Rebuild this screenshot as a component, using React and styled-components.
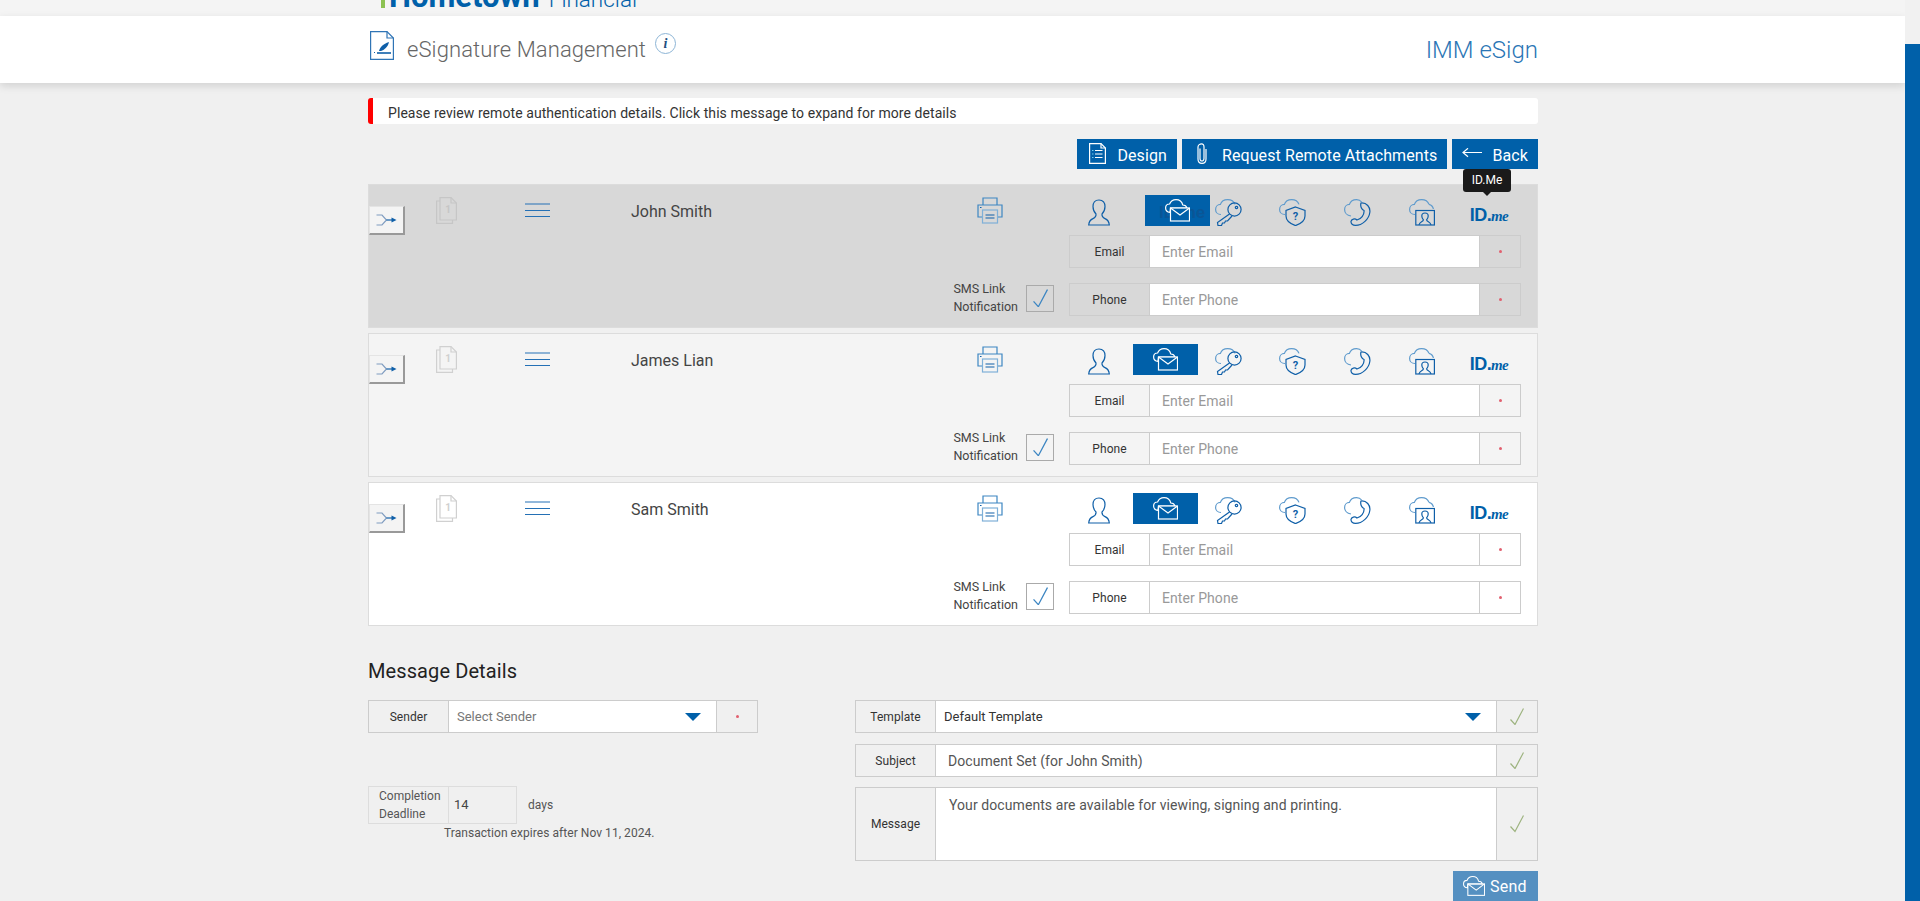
import React from "react";
import styled, { createGlobalStyle } from "styled-components";

const DARK = "#0f5fa8";
const LIGHT = "#5f9bcd";

const GlobalStyle = createGlobalStyle`
  html, body {
    margin: 0;
    height: 100%;
    overflow: hidden;
    background: #f0f0f0;
    font-family: Roboto, "Liberation Sans", sans-serif;
  }
  * { box-sizing: border-box; }
`;

const Icon = styled.svg`
  position: relative;
  display: block;
  flex: none;
  fill: none;
  stroke: ${(p) => p.$color || DARK};
  stroke-width: 1.2;
`;

const CLOUD = "M6 15.5 C2.5 15.5 .6 13 .6 10.4 C.6 7.5 2.8 5.4 5.4 5.4 C6.4 2.4 9.4 .6 12.6 .6 C16.2 .6 19 2.6 20 5.4";

const PersonIcon = () => (
  <Icon width="22" height="27" viewBox="0 0 22 27">
    <path d="M11 1 C6.8 1 5 4 5 7.5 C5 11 6.5 13.5 8 15 C8.2 17 7.5 18.5 5 19.6 C2.6 20.6 1 22 .7 26 H21.3 C21 22 19.4 20.6 17 19.6 C14.5 18.5 13.8 17 14 15 C15.5 13.5 17 11 17 7.5 C17 4 15.2 1 11 1 Z" />
  </Icon>
);

const MailCloudIcon = ({ size = 25, fill = "none" }) => (
  <Icon width={size} height={size * 0.9} viewBox="0 0 25 22.5" $color="#fff">
    <path d="M5 13.4 C1.8 13 .6 10.8 .6 9 C.6 6.6 2.4 5 4.6 5 C5.6 2.4 8 .6 11 .6 C14.4 .6 17 2.8 17.8 6 C19.6 6 21.4 7 22 9 H5.5 Z" fill={fill} />
    <rect x="5.5" y="9" width="19" height="13" fill={fill} />
    <path d="M5.5 9 L15 16 L24.5 9" />
  </Icon>
);

const KeyIcon = () => (
  <Icon width="27" height="27" viewBox="0 0 27 27">
    <path d={CLOUD} stroke={LIGHT} />
    <circle cx="19.5" cy="10.5" r="6.6" />
    <circle cx="21.5" cy="8.5" r="1.2" />
    <path d="M14.5 15 L2.5 23.5 L3 26.5 H6.5 L7.5 24 H9.5 L10.5 22 H12.5 L17 17" />
  </Icon>
);

const QuestionMark = styled.text`
  font: 700 11px Roboto, sans-serif;
  fill: ${DARK};
  stroke: none;
`;

const ShieldIcon = () => (
  <Icon width="27" height="27" viewBox="0 0 27 27">
    <path d={CLOUD} stroke={LIGHT} />
    <path d="M16.5 8 L26 11.5 V17 C26 21.5 21 25 16.5 26.6 C12 25 7 21.5 7 17 V11.5 Z" />
    <QuestionMark x="16.5" y="21" textAnchor="middle">?</QuestionMark>
  </Icon>
);

const PhoneIcon = () => (
  <Icon width="27" height="27" viewBox="0 0 27 27">
    <path d="M7 17 C2.8 16.5 .6 13.5 .6 10.4 C.6 7.5 2.8 5.4 5.4 5.4 C6.4 2.4 9.4 .6 12.6 .6 C15 .6 16.4 1.4 17.6 3" stroke={LIGHT} />
    <path d="M17 4 C22.5 3.5 26.6 8 25.8 13.5 C25 20 18.5 26.4 11.5 26.4 C8.6 26.4 6.8 24.6 7 22.4 C7.4 20 10.8 19 13 21 C17 20 20.5 16 20 11.5 C17.8 10.8 16 7.5 17 4 Z" />
  </Icon>
);

const VideoIcon = () => (
  <Icon width="26" height="27" viewBox="0 0 26 27">
    <path d={CLOUD} stroke={LIGHT} />
    <path d="M20 5.4 C22.4 6 24 8 24.4 10" stroke={LIGHT} />
    <rect x="6.8" y="11.5" width="18.6" height="14.5" />
    <path d="M10 26 C10.5 22.5 14 23 14.4 20.8 C13.2 19.6 12.8 18.4 12.8 17 C12.8 15 14.2 14 16 14 C17.8 14 19.2 15 19.2 17 C19.2 18.4 18.8 19.6 17.6 20.8 C18 23 21.5 22.5 22 26" />
  </Icon>
);

const PrinterIcon = () => (
  <Icon width="26" height="27" viewBox="0 0 26 27" $color="#3d86c2">
    <path d="M6 8 V1 H20 V8" />
    <path d="M5 20 H1 V8 H25 V20 H21" />
    <rect x="5.5" y="13" width="15" height="13" stroke="#7fb0d8" />
    <path d="M8.5 18 H17.5 M8.5 21 H17.5" stroke={DARK} />
    <path d="M3 10.5 H4.5" stroke={DARK} />
  </Icon>
);

const PageNumber = styled.text`
  font: 700 10px Roboto, sans-serif;
  stroke: none;
`;

const DocIcon = ({ $color }) => (
  <Icon width="21" height="27" viewBox="0 0 21 27" $color={$color}>
    <path d="M4 4 H.6 V26.4 H16.5 V23" />
    <path d="M4 .6 H15 L20.4 6 V23 H4 Z" />
    <path d="M15 .6 V6 H20.4" />
    <PageNumber x="12" y="15.5" textAnchor="middle" fill={$color}>1</PageNumber>
  </Icon>
);

const MenuIcon = () => (
  <Icon width="25" height="15" viewBox="0 0 25 15" $color="#2470b5">
    <path d="M0 1 H25 M0 7.5 H25 M0 13.5 H25" />
  </Icon>
);

const RouteIcon = () => (
  <Icon width="21" height="12" viewBox="0 0 21 12">
    <path d="M.5 1 H6 L10.5 6 L6 11 H.5" stroke="#7f9cc0" />
    <path d="M10.5 6 H16" />
    <path d="M15.5 3.5 L20.5 6 L15.5 8.5 Z" fill={DARK} stroke="none" />
  </Icon>
);

const CheckIcon = ({ $color = "#9db37f", size = 14 }) => (
  <Icon width={size} height={size * 1.25} viewBox="0 0 14 17.5" $color={$color}>
    <path d="M.5 11.5 L5 16.5 L13.5 .5" />
  </Icon>
);

const DesignIcon = () => (
  <Icon width="17" height="21" viewBox="0 0 17 21" $color="#fff">
    <path d="M.6 .6 H12 L16.4 5 V20.4 H.6 Z" />
    <path d="M12 .6 V5 H16.4" />
    <path d="M6 7.5 H13.5 M6 11 H13.5 M6 14.5 H13.5" />
    <path d="M3 7.5 H4.5 M3 11 H4.5 M3 14.5 H4.5" stroke="#6fd0f0" />
  </Icon>
);

const ClipIcon = () => (
  <Icon width="10" height="21" viewBox="0 0 10 21" $color="#fff">
    <path d="M3 5.5 V15.5 C3 17 4 18 5 18 C6 18 7 17 7 15.5 V4 C7 2 6 .8 4.6 .8 C3 .8 1 2 1 4 V16 C1 19 3 20.4 5 20.4 C7 20.4 9 19 9 16 V6" />
  </Icon>
);

const ArrowIcon = () => (
  <Icon width="20" height="11" viewBox="0 0 20 11" $color="#fff">
    <path d="M20 4.5 H1 M6 .3 L1 4.5 L6 8.7" />
  </Icon>
);

const SignDocIcon = () => (
  <Icon width="24" height="29" viewBox="0 0 24 29" $color="#2f74b5">
    <path d="M.6 .6 H17 L23.4 7 V28.4 H.6 Z" />
    <path d="M17 .6 V7 H23.4" />
    <path d="M7 22 H21" stroke={DARK} strokeWidth="1.6" />
    <path d="M9 20 C10 16 13 13 19 11 C18 16 14 19 11 20 Z" fill={DARK} stroke="none" />
    <path d="M4 21.5 H5" stroke={DARK} />
  </Icon>
);

const Page = styled.div`
  display: flex;
  height: 100vh;
  overflow: hidden;
`;

const Main = styled.div`
  flex: 1;
  min-width: 0;
`;

const ScrollTrack = styled.div`
  width: 15px;
  padding-top: 44px;
  background: #f1f1f1;
`;

const ScrollThumb = styled.div`
  height: 100%;
  background: #0060a9;
`;

const BrandStrip = styled.div`
  height: 16px;
  background: #f4f4f4;
  display: flex;
  align-items: flex-end;
  padding: 0 0 8px 381px;
`;

const Brand = styled.div`
  display: flex;
  align-items: baseline;
  line-height: 30px;
  height: 30px;
  margin-bottom: -4px;
  color: #0060a9;
`;

const BrandMark = styled.span`
  width: 4px;
  height: 26px;
  margin-right: 4px;
  background: #8cc152;
  align-self: flex-end;
  margin-bottom: 4px;
`;

const BrandStrong = styled.span`
  font-size: 31px;
  font-weight: 700;
`;

const BrandLight = styled.span`
  font-size: 22.5px;
  font-weight: 300;
  margin-left: 9px;
`;

const HeaderBand = styled.header`
  height: 67px;
  background: #fff;
  box-shadow: 0 3px 8px rgba(0, 0, 0, 0.13);
  padding: 15px 367px 0 370px;
  display: flex;
  align-items: flex-start;
`;

const HeaderTitle = styled.h1`
  margin: 6px 0 0 13px;
  font-size: 22px;
  font-weight: 300;
  letter-spacing: 0.1px;
  line-height: 26px;
  color: #666;
`;

const InfoBadge = styled.span`
  width: 21px;
  height: 21px;
  margin: 2px 0 0 9px;
  border: 1px solid #8db5d6;
  border-radius: 50%;
  display: flex;
  align-items: center;
  justify-content: center;
  font: italic 700 14px "Liberation Serif", serif;
  color: #1f4f80;
`;

const Product = styled.div`
  margin: 6px 0 0 auto;
  font-size: 24px;
  font-weight: 300;
  line-height: 26px;
  color: #2a75b5;
`;

const Content = styled.main`
  width: 1170px;
  margin-left: 368px;
  padding-top: 15px;
`;

const Notice = styled.div`
  height: 26px;
  background: #fff;
  border-left: 5px solid #f00;
  border-radius: 3px;
  padding-left: 15px;
  font-size: 14px;
  letter-spacing: 0.07px;
  line-height: 31px;
  color: #333;
`;

const Actions = styled.div`
  display: flex;
  justify-content: flex-end;
  gap: 5px;
  margin: 15px 0;
`;

const ActionButton = styled.button`
  height: 30px;
  border: 0;
  padding: 2px 10px 0 ${(p) => p.$left || 12}px;
  display: flex;
  align-items: center;
  gap: ${(p) => p.$gap || 11}px;
  background: #0060a9;
  color: #fff;
  font: 16px Roboto, sans-serif;
  letter-spacing: 0.1px;
  white-space: nowrap;

  svg {
    margin-top: -3px;
  }
`;

const Signers = styled.div`
  display: flex;
  flex-direction: column;
  gap: 5px;
`;

const SignerRow = styled.section`
  display: grid;
  grid-template-columns: 67px 89px 106px 346px 89px 1fr;
  padding: 10px 0 11px;
  border: 1px solid #dcdcdc;
  background: ${(p) => p.$bg};
`;

const RouteCell = styled.div`
  grid-row: 1 / span 2;
  padding-top: 11px;
`;

const RouteButton = styled.button`
  width: 36px;
  height: 29px;
  padding: 0;
  display: flex;
  align-items: center;
  justify-content: center;
  background: #f4f4f4;
  border: 1px solid #e4e4e4;
  border-right: 2px solid #999;
  border-bottom: 2px solid #999;
`;

const DocCell = styled.div`
  grid-row: 1 / span 2;
  padding-top: 2px;
`;

const MenuCell = styled.div`
  grid-row: 1 / span 2;
  padding-top: 8px;
`;

const NameCell = styled.div`
  grid-row: 1 / span 2;
  padding-top: 7px;
  font-size: 16px;
  line-height: 20px;
  color: #444;
`;

const PrintCell = styled.div`
  grid-row: 1 / span 2;
  padding-top: 2px;
`;

const MethodStrip = styled.div`
  grid-column: 6;
  display: grid;
  grid-template-columns: 65px 67px 61px 67px 62px 67px 68px;
  height: 30px;
  margin-bottom: 10px;
`;

const Method = styled.div`
  position: relative;
  display: flex;
  justify-content: center;
  padding-top: 4px;
  margin-left: ${(p) => (p.$active ? 2 : 0)}px;
  background: ${(p) => (p.$active ? "#0060a9" : "transparent")};
  transform: translateX(${(p) => p.$shift || 0}px);
`;

const GhostLabel = styled.span`
  position: absolute;
  left: 14px;
  top: 8px;
  font: 700 17px "Liberation Sans", sans-serif;
  color: #0a5596;
  white-space: nowrap;
`;

const IdMe = styled.span`
  padding-top: 6px;
  font: 700 18px/20px "Liberation Sans", sans-serif;
  letter-spacing: -0.6px;
  color: #0060a9;
`;

const IdMeTail = styled.em`
  font: italic 700 15px "Liberation Serif", serif;
`;

const Tooltip = styled.div`
  position: absolute;
  left: 8px;
  top: -26px;
  width: 48px;
  height: 23px;
  border-radius: 3px;
  background: #1a1a1a;
  color: #fff;
  font-size: 12px;
  line-height: 23px;
  text-align: center;

  &::after {
    content: "";
    position: absolute;
    left: 20px;
    bottom: -4px;
    border: 4px solid transparent;
    border-bottom: 0;
    border-top-color: #1a1a1a;
  }
`;

const SmsCell = styled.div`
  grid-column: 4 / span 2;
  grid-row: 3;
  justify-self: end;
  align-self: end;
  display: flex;
  align-items: center;
  gap: 8px;
  margin-right: 12px;
  font-size: 12.5px;
  line-height: 18px;
  color: #444;
`;

const SmsBox = styled.div`
  width: 28px;
  height: 27px;
  border: 1px solid #aaa;
  display: flex;
  align-items: center;
  justify-content: center;
`;

const FieldWrap = styled.div`
  grid-column: 6;
  margin: ${(p) => (p.$last ? "15px" : "0")} 16px 0 3px;
`;

const Field = styled.div`
  display: flex;
  min-height: ${(p) => p.$height || 33}px;
  margin-bottom: ${(p) => p.$after || 0}px;
  border: 1px solid #ccc;
`;

const FieldLabel = styled.div`
  flex: none;
  width: 80px;
  display: flex;
  align-items: center;
  justify-content: center;
  border-right: 1px solid #ccc;
  font-size: 12px;
  letter-spacing: 0.05px;
  color: #333;
`;

const FieldInput = styled.input`
  flex: 1;
  min-width: 0;
  border: 0;
  outline: 0;
  padding: 0 0 0 12px;
  background: #fff;
  font: 14px Roboto, sans-serif;
  letter-spacing: 0.05px;
  color: #555;

  &::placeholder {
    color: #999;
    opacity: 1;
  }
`;

const FieldSelect = styled.div`
  flex: 1;
  display: flex;
  align-items: center;
  justify-content: space-between;
  padding: 0 15px 0 8px;
  background: #fff;
  font-size: 13px;
  color: ${(p) => p.$color || "#777"};
`;

const Caret = styled.span`
  border: 8px solid transparent;
  border-bottom: 0;
  border-top-color: #0060a9;
`;

const FieldArea = styled.textarea`
  flex: 1;
  border: 0;
  outline: 0;
  resize: none;
  padding: 9px 13px;
  background: #fff;
  font: 14px Roboto, sans-serif;
  letter-spacing: 0.08px;
  color: #555;
`;

const FieldEnd = styled.div`
  flex: none;
  width: 41px;
  display: flex;
  align-items: center;
  justify-content: center;
  border-left: 1px solid #ccc;
`;

const Required = styled.span`
  width: 3px;
  height: 3px;
  border-radius: 50%;
  background: #e2606f;
`;

const SectionTitle = styled.h2`
  margin: 33px 0 17px;
  font-size: 20px;
  font-weight: 400;
  letter-spacing: 0.1px;
  line-height: 24px;
  color: #222;
`;

const DetailsGrid = styled.div`
  display: grid;
  grid-template-columns: 390px 683px;
  justify-content: space-between;
`;

const LeftColumn = styled.div`
  display: flex;
  flex-direction: column;
`;

const RightColumn = styled.div`
  display: flex;
  flex-direction: column;
  gap: 10px;
`;

const DeadlineRow = styled.div`
  display: flex;
  align-items: center;
  margin-top: 53px;
`;

const DeadlineBox = styled.div`
  display: flex;
  width: 149px;
  height: 38px;
  border: 1px solid #ddd;
`;

const DeadlineLabel = styled.div`
  width: 80px;
  padding-left: 10px;
  border-right: 1px solid #ddd;
  font-size: 12px;
  line-height: 18px;
  color: #555;
`;

const DeadlineValue = styled.div`
  padding-left: 5px;
  font-size: 13px;
  line-height: 36px;
  color: #444;
`;

const DeadlineUnit = styled.span`
  margin-left: 11px;
  font-size: 12px;
  color: #555;
`;

const ExpiryNote = styled.div`
  margin-left: 76px;
  font-size: 12px;
  letter-spacing: 0.05px;
  line-height: 18px;
  color: #555;
`;

const SendRow = styled.div`
  display: flex;
  justify-content: flex-end;
`;

const SendButton = styled.button`
  width: 85px;
  height: 30px;
  border: 0;
  padding: 0 0 0 10px;
  display: flex;
  align-items: center;
  gap: 5px;
  background: #5590c1;
  color: #fff;
  font: 16px Roboto, sans-serif;
  letter-spacing: 0.2px;
`;

const signers = [
  { name: "John Smith", bg: "#d8d8d8", doc: "#c6c6c6", shift: 12, hovered: true },
  { name: "James Lian", bg: "#f4f4f4", doc: "#d0d0d0" },
  { name: "Sam Smith", bg: "#fff", doc: "#d0d0d0" },
];

const Signer = ({ name, bg, doc, shift, hovered }) => (
  <SignerRow $bg={bg}>
    <RouteCell>
      <RouteButton>
        <RouteIcon />
      </RouteButton>
    </RouteCell>
    <DocCell>
      <DocIcon $color={doc} />
    </DocCell>
    <MenuCell>
      <MenuIcon />
    </MenuCell>
    <NameCell>{name}</NameCell>
    <PrintCell>
      <PrinterIcon />
    </PrintCell>
    <MethodStrip>
      <Method>
        <PersonIcon />
      </Method>
      <Method $active $shift={shift}>
        {hovered && <GhostLabel>ID.me</GhostLabel>}
        <MailCloudIcon fill="#0060a9" />
      </Method>
      <Method>
        <KeyIcon />
      </Method>
      <Method>
        <ShieldIcon />
      </Method>
      <Method>
        <PhoneIcon />
      </Method>
      <Method>
        <VideoIcon />
      </Method>
      <Method>
        <IdMe>
          ID.<IdMeTail>me</IdMeTail>
        </IdMe>
        {hovered && <Tooltip>ID.Me</Tooltip>}
      </Method>
    </MethodStrip>
    <FieldWrap>
      <Field>
        <FieldLabel>Email</FieldLabel>
        <FieldInput placeholder="Enter Email" />
        <FieldEnd>
          <Required />
        </FieldEnd>
      </Field>
    </FieldWrap>
    <SmsCell>
      <span>
        SMS Link
        <br />
        Notification
      </span>
      <SmsBox>
        <CheckIcon $color="#3d86c2" size={15} />
      </SmsBox>
    </SmsCell>
    <FieldWrap $last>
      <Field>
        <FieldLabel>Phone</FieldLabel>
        <FieldInput placeholder="Enter Phone" />
        <FieldEnd>
          <Required />
        </FieldEnd>
      </Field>
    </FieldWrap>
  </SignerRow>
);

const App = () => (
  <Page>
    <GlobalStyle />
    <Main>
      <BrandStrip>
        <Brand>
          <BrandMark />
          <BrandStrong>Hometown</BrandStrong>
          <BrandLight>Financial</BrandLight>
        </Brand>
      </BrandStrip>
      <HeaderBand>
        <SignDocIcon />
        <HeaderTitle>eSignature Management</HeaderTitle>
        <InfoBadge>i</InfoBadge>
        <Product>IMM eSign</Product>
      </HeaderBand>
      <Content>
        <Notice>Please review remote authentication details. Click this message to expand for more details</Notice>
        <Actions>
          <ActionButton>
            <DesignIcon />
            Design
          </ActionButton>
          <ActionButton $left={15} $gap={15}>
            <ClipIcon />
            Request Remote Attachments
          </ActionButton>
          <ActionButton $left={10} $gap={10}>
            <ArrowIcon />
            Back
          </ActionButton>
        </Actions>
        <Signers>
          {signers.map((s) => (
            <Signer key={s.name} {...s} />
          ))}
        </Signers>
        <SectionTitle>Message Details</SectionTitle>
        <DetailsGrid>
          <LeftColumn>
            <Field>
              <FieldLabel>Sender</FieldLabel>
              <FieldSelect>
                Select Sender
                <Caret />
              </FieldSelect>
              <FieldEnd>
                <Required />
              </FieldEnd>
            </Field>
            <DeadlineRow>
              <DeadlineBox>
                <DeadlineLabel>
                  Completion
                  <br />
                  Deadline
                </DeadlineLabel>
                <DeadlineValue>14</DeadlineValue>
              </DeadlineBox>
              <DeadlineUnit>days</DeadlineUnit>
            </DeadlineRow>
            <ExpiryNote>Transaction expires after Nov 11, 2024.</ExpiryNote>
          </LeftColumn>
          <RightColumn>
            <Field $after={1}>
              <FieldLabel>Template</FieldLabel>
              <FieldSelect $color="#333">
                Default Template
                <Caret />
              </FieldSelect>
              <FieldEnd>
                <CheckIcon />
              </FieldEnd>
            </Field>
            <Field>
              <FieldLabel>Subject</FieldLabel>
              <FieldInput defaultValue="Document Set (for John Smith)" />
              <FieldEnd>
                <CheckIcon />
              </FieldEnd>
            </Field>
            <Field $height={74}>
              <FieldLabel>Message</FieldLabel>
              <FieldArea defaultValue="Your documents are available for viewing, signing and printing." />
              <FieldEnd>
                <CheckIcon />
              </FieldEnd>
            </Field>
            <SendRow>
              <SendButton>
                <MailCloudIcon size={22} />
                Send
              </SendButton>
            </SendRow>
          </RightColumn>
        </DetailsGrid>
      </Content>
    </Main>
    <ScrollTrack>
      <ScrollThumb />
    </ScrollTrack>
  </Page>
);

export default App;
